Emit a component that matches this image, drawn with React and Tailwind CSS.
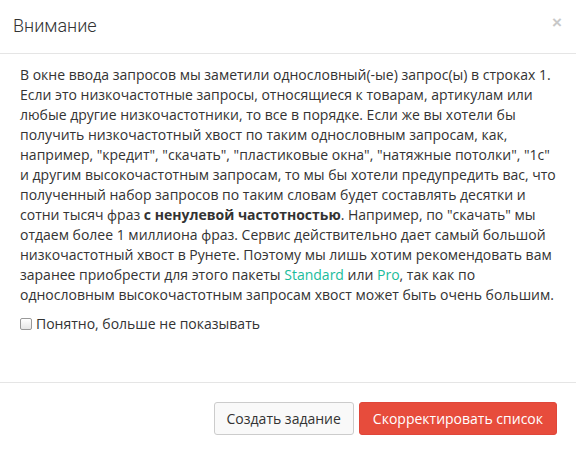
import React from 'react';

export default function App() {
  return (
    <div className="w-[576px] h-[455px] bg-white text-[#333] font-['Open_Sans',sans-serif] text-[14px] leading-[20px] flex flex-col">
      {/* Header */}
      <div className="h-[54px] border-b border-[#e5e5e5] flex items-center justify-between pl-[13px] pr-[14px] shrink-0">
        <h4 className="font-['Roboto',sans-serif] font-light text-[18px] text-[#333] pb-[2px]">Внимание</h4>
        <span className="text-[#c8c8c8] text-[17px] font-bold leading-none pb-[9px] font-['Liberation_Sans',sans-serif]">×</span>
      </div>

      {/* Body */}
      <div className="flex-1 px-[20px] pt-[11px]">
        <p>
          В окне ввода запросов мы заметили однословный(-ые) запрос(ы) в строках 1. Если это низкочастотные запросы, относящиеся к товарам, артикулам или любые другие низкочастотники, то все в порядке. Если же вы хотели бы получить низкочастотный хвост по таким однословным запросам, как, например, "кредит", "скачать", "пластиковые окна", "натяжные потолки", "1с" и другим высокочастотным запросам, то мы бы хотели предупредить вас, что полученный набор запросов по таким словам будет составлять десятки и сотни тысяч фраз <b className="font-bold">с ненулевой частотностью</b>. Например, по "скачать" мы отдаем более 1 миллиона фраз. Сервис действительно дает самый большой низкочастотный хвост в Рунете. Поэтому мы лишь хотим рекомендовать вам заранее приобрести для этого пакеты <a className="text-[#1abc9c]">Standard</a> или <a className="text-[#1abc9c]">Pro</a>, так как по однословным высокочастотным запросам хвост может быть очень большим.
        </p>
        <label className="flex items-center gap-[4px] mt-[9px]">
          <span className="w-[12px] h-[12px] rounded-[2px] border border-[#999] bg-gradient-to-b from-white to-[#e6e6e6] shrink-0"></span>
          <span>Понятно, больше не показывать</span>
        </label>
      </div>

      {/* Footer */}
      <div className="h-[73px] border-t border-[#e5e5e5] flex items-start justify-end gap-[5px] pr-[19px] pt-[19px] shrink-0">
        <button className="h-[33px] px-[12px] rounded-[3px] border border-[#ccc] bg-[#f9f9f9] text-[#333] text-[14px]">Создать задание</button>
        <button className="h-[33px] px-[13px] rounded-[3px] border border-[#e0463a] bg-[#e74c3c] text-white text-[14px]">Скорректировать список</button>
      </div>
    </div>
  );
}
